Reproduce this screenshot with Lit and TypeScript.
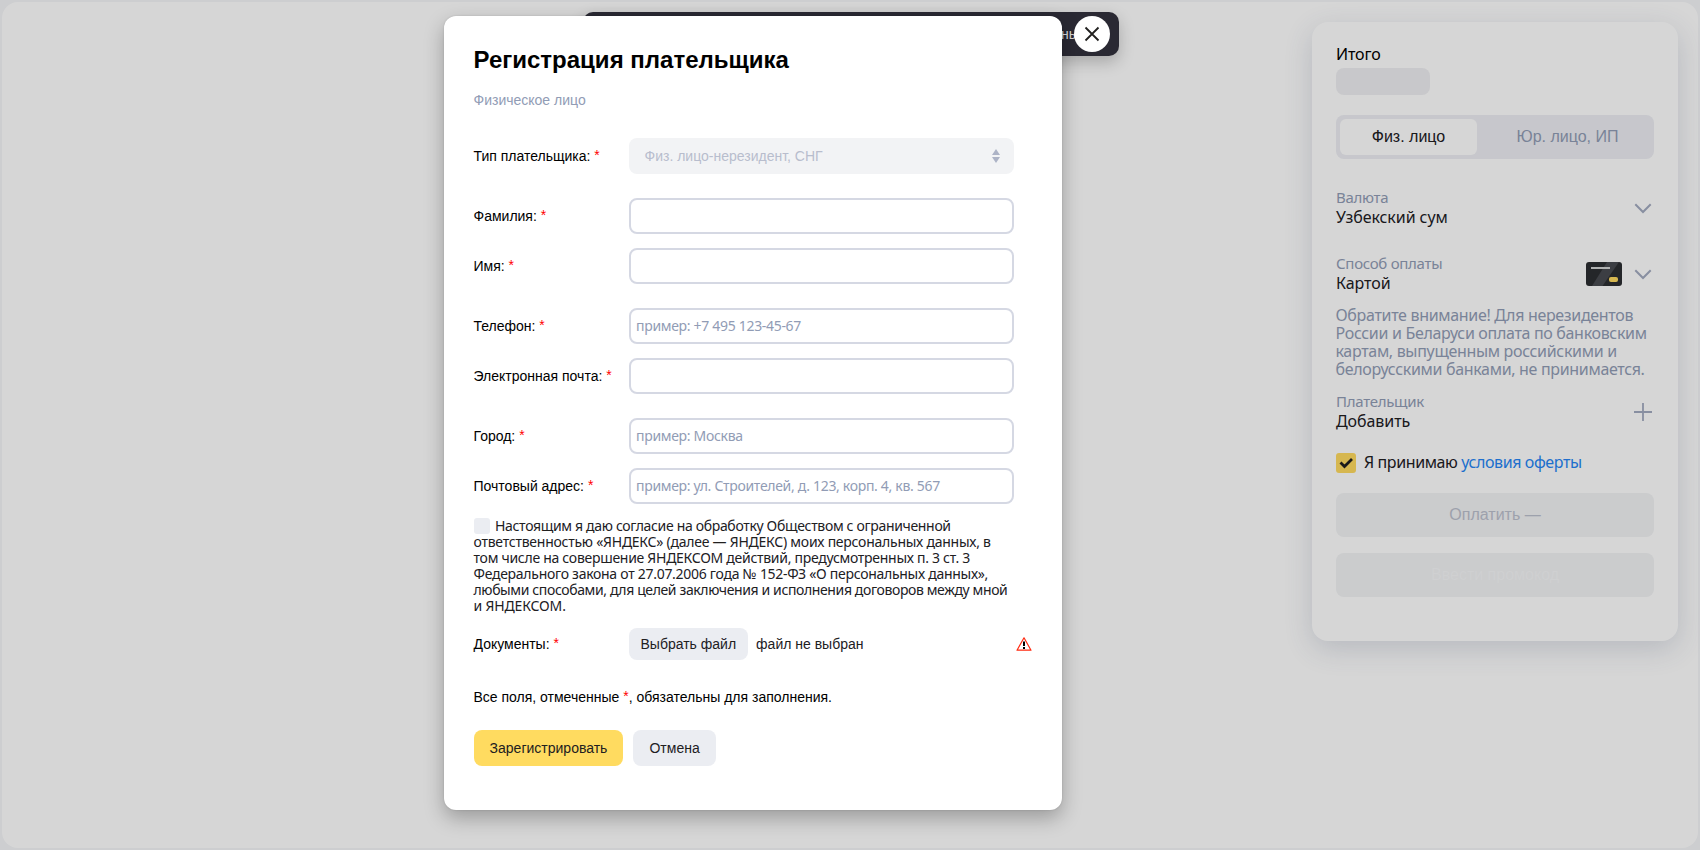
import { LitElement, html, css, nothing } from "lit";
import { customElement } from "lit/decorators.js";
import { classMap } from "lit/directives/class-map.js";
import { styleMap } from "lit/directives/style-map.js";

interface Field {
  label: string;
  placeholder?: string;
  gap?: boolean;
}

const FIELDS: Field[] = [
  { label: "Фамилия:", gap: true },
  { label: "Имя:" },
  { label: "Телефон:", placeholder: "пример: +7 495 123-45-67", gap: true },
  { label: "Электронная почта:" },
  { label: "Город:", placeholder: "пример: Москва", gap: true },
  { label: "Почтовый адрес:", placeholder: "пример: ул. Строителей, д. 123, корп. 4, кв. 567" },
];

// Each line of the consent text with its tracking in pixels.
const CONSENT: [string, number][] = [
  ["Настоящим я даю согласие на обработку Обществом с ограниченной", -0.33],
  ["ответственностью «ЯНДЕКС» (далее — ЯНДЕКС) моих персональных данных, в", -0.25],
  ["том числе на совершение ЯНДЕКСОМ действий, предусмотренных п. 3 ст. 3", -0.28],
  ["Федерального закона от 27.07.2006 года № 152-ФЗ «О персональных данных»,", -0.28],
  ["любыми способами, для целей заключения и исполнения договоров между мной", -0.38],
  ["и ЯНДЕКСОМ.", -0.15],
];

@customElement("order-summary")
class OrderSummary extends LitElement {
  static styles = css`
    :host {
      display: flex;
      flex-direction: column;
      box-sizing: border-box;
      width: 366px;
      height: 619px;
      padding: 22px 24px 44px;
      border-radius: 16px;
      background: #fff;
      box-shadow: 0 8px 28px rgba(60, 75, 110, 0.19);
      color: #21201f;
      font: 16px/20px "Noto Sans", sans-serif;
      white-space: nowrap;
    }
    .total { color: #000; letter-spacing: -0.15px; }
    .chip { width: 94px; height: 27px; margin-top: 4px; border-radius: 8px; background: #efeff2; }
    .tabs {
      display: grid;
      grid-template-columns: 137px 1fr;
      box-sizing: border-box;
      height: 44px;
      margin-top: 20px;
      padding: 4px;
      border-radius: 8px;
      background: #edeef3;
      font: 16px/36px "Liberation Sans", sans-serif;
      text-align: center;
    }
    .tab { color: #919cb5; padding-left: 8px; }
    .tab.active { padding: 0; border-radius: 6px; background: #fff; color: #21201f; }
    .item { display: flex; align-items: center; }
    .text { flex: 1; }
    .label { margin-bottom: 1px; color: #919cb5; font-size: 15px; line-height: 18px; letter-spacing: -0.28px; }
    .value { letter-spacing: -0.07px; }
    .currency { margin-top: 29px; }
    .method { margin-top: 27px; }
    .payer { margin-top: 14px; }
    .icon { display: block; flex: none; margin-top: 1px; }
    .bank { margin: 0 10px 0 0; }
    .note { margin: 13px 0 0 -0.5px; color: #919cb5; line-height: 18px; letter-spacing: -0.32px; }
    .accept { display: flex; align-items: center; height: 20px; margin-top: 22px; letter-spacing: -0.4px; line-height: 18px; }
    .accept-text { margin-bottom: 2px; }
    .box { display: block; margin-right: 8px; }
    .link { color: #2585f5; }
    .btn {
      height: 44px;
      margin-top: 20px;
      border-radius: 8px;
      background: #f2f3f5;
      color: #bcc0cd;
      font: 16px/43px "Liberation Sans", sans-serif;
      text-align: center;
    }
    .promo { margin-top: 16px; color: #f7f8f9; }
  `;

  private chevron() {
    return html`<svg class="icon" width="22" height="22" viewBox="0 0 22 22" fill="none" stroke="#a3abc0" stroke-width="2">
      <path d="M3.3 7.3 11 15l7.7-7.7" />
    </svg>`;
  }

  render() {
    return html`
      <div class="total">Итого</div>
      <div class="chip"></div>
      <div class="tabs">
        <div class="tab active">Физ. лицо</div>
        <div class="tab">Юр. лицо, ИП</div>
      </div>
      <div class="item currency">
        <div class="text">
          <div class="label">Валюта</div>
          <div class="value">Узбекский сум</div>
        </div>
        ${this.chevron()}
      </div>
      <div class="item method">
        <div class="text">
          <div class="label">Способ оплаты</div>
          <div class="value">Картой</div>
        </div>
        <svg class="bank" width="36" height="24" viewBox="0 0 36 24">
          <defs><clipPath id="c"><rect width="36" height="24" rx="3" /></clipPath></defs>
          <g clip-path="url(#c)">
            <path fill="#2c2e31" d="M0 0h36v24H0z" />
            <path fill="#484a50" d="M21 0h12L16.500 24H6z" />
            <path fill="#d3d4d4" d="M5 5h19v2H5z" />
            <rect x="23" y="15" width="9" height="5" rx="2" fill="#ffdb60" />
          </g>
        </svg>
        ${this.chevron()}
      </div>
      <div class="note">
        Обратите внимание! Для нерезидентов<br />России и Беларуси оплата по банковским<br />картам, выпущенным
        российскими и<br />белорусскими банками, не принимается.
      </div>
      <div class="item payer">
        <div class="text">
          <div class="label">Плательщик</div>
          <div class="value">Добавить</div>
        </div>
        <svg class="icon" width="22" height="22" viewBox="0 0 22 22" fill="none" stroke="#a3abc0" stroke-width="1.800">
          <path d="M11 2v18M2 11h18" />
        </svg>
      </div>
      <div class="accept">
        <svg class="box" width="20" height="20" viewBox="0 0 20 20">
          <rect width="20" height="20" rx="3" fill="#ffdb60" />
          <path d="m4.500 9.500 4 4 7.500-7.500" fill="none" stroke="#21201f" stroke-width="2.800" />
        </svg>
        <span class="accept-text">Я принимаю <span class="link">условия оферты</span></span>
      </div>
      <div class="btn">Оплатить —</div>
      <div class="btn promo">Ввести промокод</div>
    `;
  }
}

@customElement("payer-form")
class PayerForm extends LitElement {
  static styles = css`
    :host {
      display: block;
      box-sizing: border-box;
      width: 618px;
      height: 794px;
      padding: 30px 30px 44px 29.500px;
      border-radius: 12px;
      background: #fff;
      box-shadow: 0 8px 20px rgba(0, 0, 0, 0.28), 0 0 2px rgba(0, 0, 0, 0.15);
      color: #000;
      font: 14px/16px "Liberation Sans", sans-serif;
      white-space: nowrap;
    }
    .title { margin: 0; font-size: 24px; line-height: 28px; }
    .subtitle { margin: 18px 0 30px; color: #919cb5; }
    .row { display: grid; grid-template-columns: 155.500px 385px; align-items: center; margin-top: 14px; }
    .row.gap { margin-top: 24px; }
    .star { position: relative; top: -1px; color: #f00; }
    .select {
      display: flex;
      justify-content: space-between;
      align-items: center;
      box-sizing: border-box;
      height: 36px;
      padding: 0 12px 0 15.500px;
      border-radius: 8px;
      background: #f2f3f5;
      color: #b8bdcd;
    }
    .input {
      box-sizing: border-box;
      width: 385px;
      height: 36px;
      padding: 0 5px 1px;
      border: 2px solid #d5d8e3;
      border-radius: 8px;
      background: #fff;
      outline: none;
      font: 14px "Noto Sans", sans-serif;
      letter-spacing: -0.31px;
    }
    .input::placeholder { color: #919cb5; opacity: 1; }
    .consent { margin-top: 14px; color: #21201f; font-family: "Noto Sans", sans-serif; }
    .line { display: flex; height: 16px; }
    .check { width: 16px; height: 16px; margin: 0 5px 0 0.500px; border-radius: 3px; background: #ebedf2; }
    .docs { grid-template-columns: 155.500px 1fr auto; }
    .file { display: flex; align-items: center; gap: 8px; color: #21201f; }
    .pick { padding: 8px 12px 8px 11.500px; border-radius: 8px; background: #ebedf2; }
    .warn { display: block; }
    .hint { margin-top: 29px; }
    .actions { display: flex; gap: 10px; margin: 25px 0 0 0.500px; }
    .btn { padding: 10px 16.500px; border-radius: 8px; background: #ebedf2; color: #21201f; }
    .primary { padding: 10px 15.600px; background: #ffdb60; }
  `;

  private label(text: string) {
    return html`<div>${text} <span class="star">*</span></div>`;
  }

  render() {
    return html`
      <h1 class="title">Регистрация плательщика</h1>
      <div class="subtitle">Физическое лицо</div>
      <div class="row">
        ${this.label("Тип плательщика:")}
        <div class="select">
          Физ. лицо-нерезидент, СНГ
          <svg width="12" height="14" viewBox="0 0 12 14" fill="#adb3c6">
            <path d="M2 6 6 0l4 6zM2 8h8l-4 6z" />
          </svg>
        </div>
      </div>
      ${FIELDS.map(
        (f) => html`<div class=${classMap({ row: true, gap: !!f.gap })}>
          ${this.label(f.label)}
          <input class="input" placeholder=${f.placeholder ?? nothing} />
        </div>`,
      )}
      <div class="consent">
        ${CONSENT.map(
          ([line, tracking], i) => html`<div class="line" style=${styleMap({ letterSpacing: `${tracking}px` })}>
            ${i === 0 ? html`<span class="check"></span>` : nothing}<span>${line}</span>
          </div>`,
        )}
      </div>
      <div class="row docs">
        ${this.label("Документы:")}
        <div class="file"><span class="pick">Выбрать файл</span>файл не выбран</div>
        <svg class="warn" width="16" height="14" viewBox="0 0 16 14">
          <path d="M8 .8 15 13.200H1z" fill="#fff" stroke="#ff2a10" stroke-width="1.200" stroke-linejoin="round" />
          <path d="M7 4.500h2v4.500H7zM7 10h2v2H7z" fill="#000" />
        </svg>
      </div>
      <div class="hint">Все поля, отмеченные <span class="star">*</span>, обязательны для заполнения.</div>
      <div class="actions">
        <div class="btn primary">Зарегистрировать</div>
        <div class="btn">Отмена</div>
      </div>
    `;
  }
}

@customElement("app-root")
class AppRoot extends LitElement {
  static styles = css`
    :host {
      display: block;
      position: relative;
      box-sizing: border-box;
      height: 850px;
      padding: 2px;
      overflow: hidden;
      background: #f5f6f8;
    }
    .page {
      display: flex;
      justify-content: flex-end;
      align-items: flex-start;
      box-sizing: border-box;
      height: 846px;
      padding: 20px;
      border-radius: 16px;
      background: #fff;
    }
    .shade { position: absolute; inset: 0; background: rgba(0, 0, 0, 0.16); }
    .toast {
      position: absolute;
      left: 583px;
      top: 12px;
      box-sizing: border-box;
      width: 536px;
      height: 44px;
      padding-left: 478px;
      border-radius: 10px;
      background: #2a2933;
      box-shadow: 0 6px 16px rgba(0, 0, 0, 0.22);
      color: #d6d6d6;
      font: 14px/45px "Liberation Sans", sans-serif;
    }
    .modal { position: absolute; left: 444px; top: 16px; }
    .close { position: absolute; left: 1074px; top: 16px; display: block; }
  `;

  render() {
    return html`
      <div class="page"><order-summary></order-summary></div>
      <div class="shade"></div>
      <div class="toast">ны</div>
      <payer-form class="modal"></payer-form>
      <svg class="close" width="36" height="36" viewBox="0 0 36 36">
        <circle cx="18" cy="18" r="18" fill="#fff" />
        <path d="m11.500 11.500 13 13m0-13-13 13" stroke="#21201f" stroke-width="1.800" />
      </svg>
    `;
  }
}
